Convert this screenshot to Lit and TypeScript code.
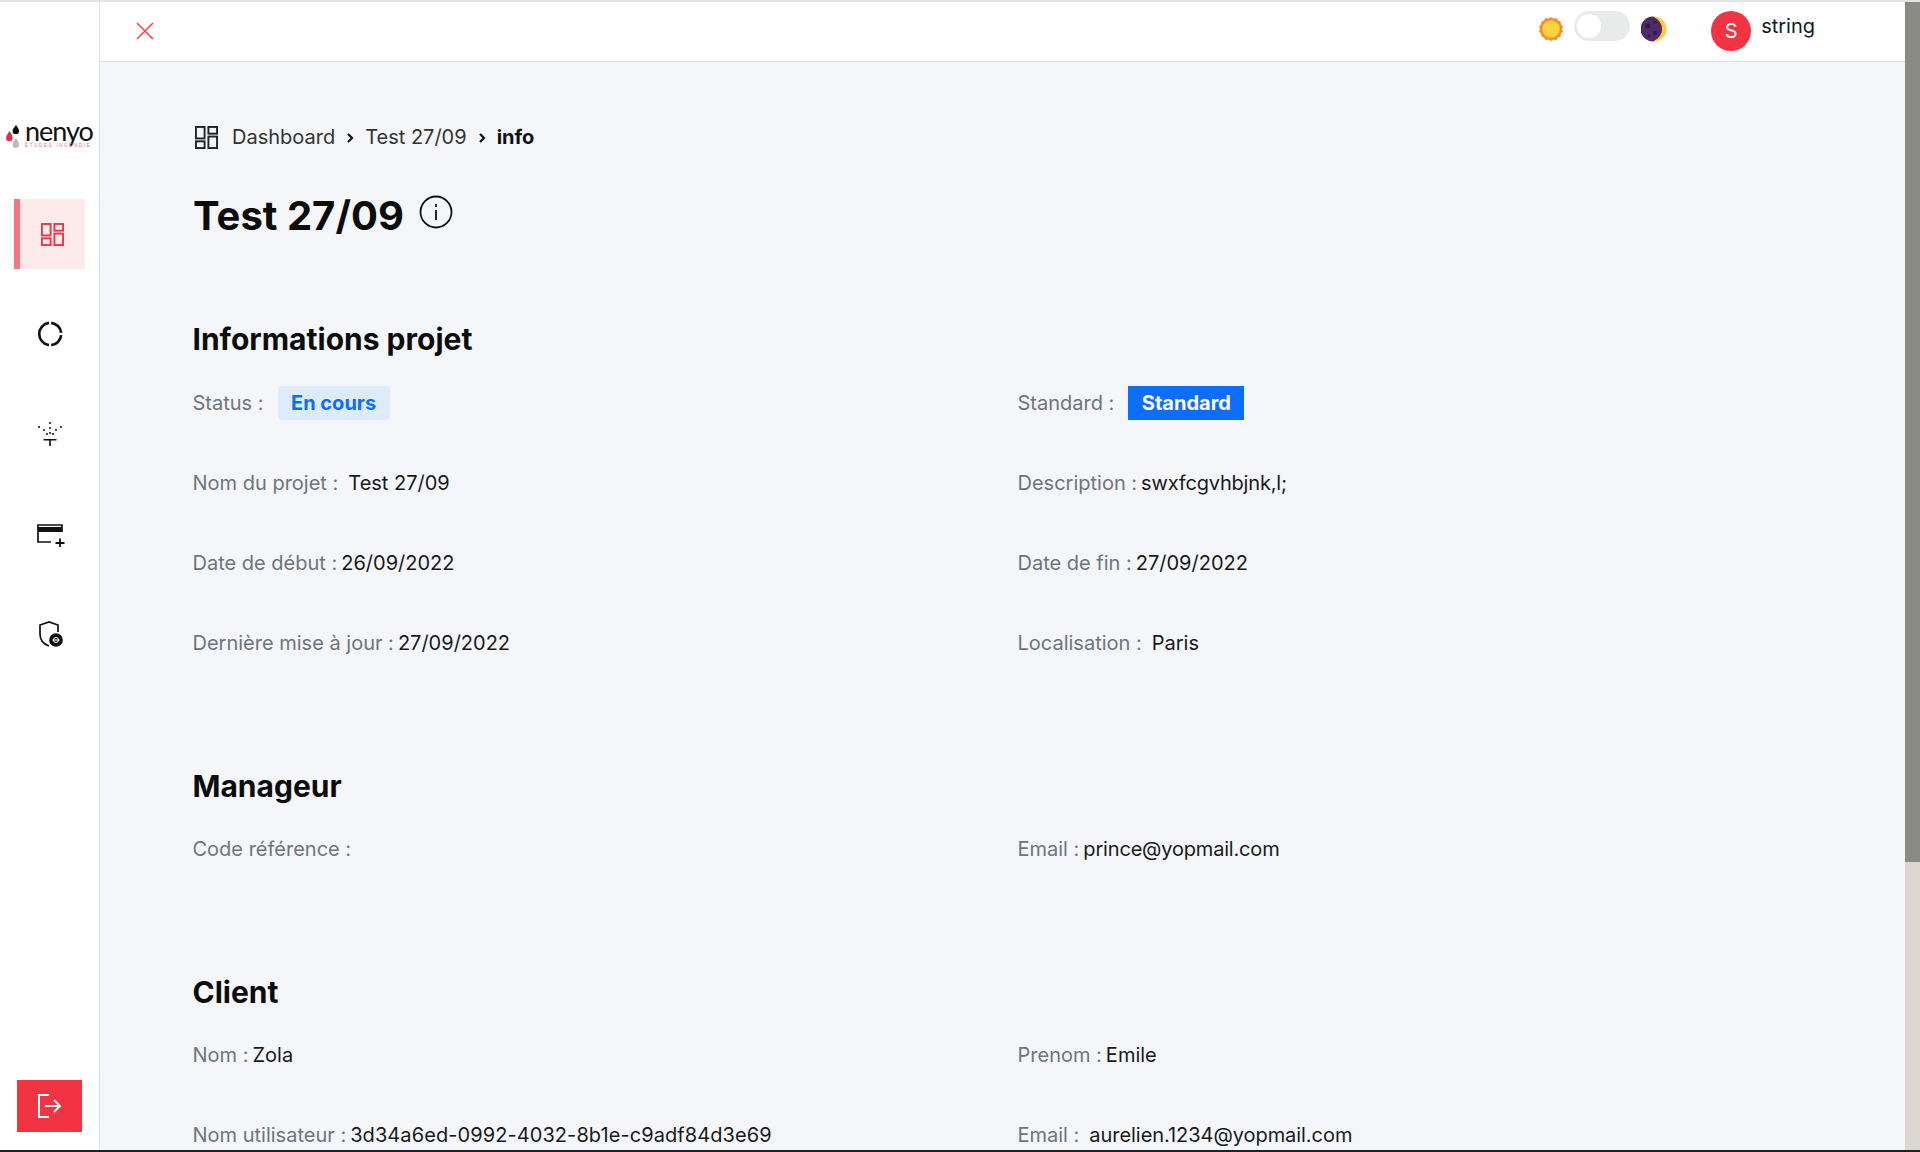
import { LitElement, html, css } from 'lit';
import { customElement } from 'lit/decorators.js';

const field = (label: string, value: string, cls = '') => html`
    <div class="field">
        <span class="label">${label}</span><span class="value ${cls}">${value}</span>
    </div>
`;

const gridIcon = (color: string) => html`
    <svg class="grid-icon" width="23" height="23" viewBox="0 0 24 24" fill="none" stroke=${color} stroke-width="2">
        <rect x="1" y="1" width="9" height="12"/><rect x="14" y="1" width="9" height="7"/>
        <rect x="1" y="16" width="9" height="7"/><rect x="14" y="11" width="9" height="12"/>
    </svg>
`;

@customElement('app-root')
export class AppRoot extends LitElement {
    static get styles () {
        return css`
            :host {
                display: block;
                height: 1152px;
                overflow: hidden;
                font-family: Inter, "Liberation Sans", sans-serif;
                font-optical-sizing: none;
                background: #f5f6f9;
                color: #111;
            }
            .frame {
                height: 1152px;
                box-sizing: border-box;
                border-top: 2px solid #e2e3e5;
                border-bottom: 2px solid #202124;
                display: flex;
            }
            .sidebar {
                width: 100px;
                flex: none;
                box-sizing: border-box;
                background: #fff;
                border-right: 1px solid #dfe1e6;
                display: flex;
                flex-direction: column;
                align-items: center;
            }
            .logo {
                margin-top: 119px;
                height: 29px;
                display: flex;
                gap: 5px;
                align-items: flex-start;
                align-self: flex-start;
                margin-left: 6px;
            }
            .logo svg { flex: none; margin-top: 4px; }
            .logo-text { display: flex; flex-direction: column; }
            .logo-name {
                font-family: Lato, sans-serif;
                font-size: 27px;
                line-height: 20px;
                letter-spacing: -1px;
                color: #111;
            }
            .logo-sub {
                font-family: "Liberation Sans", sans-serif;
                font-size: 4.500px;
                line-height: 6px;
                letter-spacing: 1.700px;
                color: #ee6a75;
                white-space: nowrap;
                margin-top: 2px;
            }
            .nav {
                margin-top: 49px;
                display: flex;
                flex-direction: column;
                gap: 30px;
                align-self: flex-start;
                margin-left: 14px;
            }
            .nav-item {
                width: 71px;
                height: 70px;
                box-sizing: border-box;
                display: flex;
                align-items: center;
                justify-content: center;
            }
            .nav-item.active {
                background: #fdeaeb;
                border-left: 6px solid #f77681;
            }
            .logout {
                margin-top: auto;
                margin-bottom: 18px;
                width: 65px;
                height: 52px;
                background: #f13342;
                display: flex;
                align-items: center;
                justify-content: center;
                margin-left: -1px;
            }
            .main {
                flex: 1;
                min-width: 0;
                display: flex;
                flex-direction: column;
            }
            .topbar {
                height: 60px;
                flex: none;
                box-sizing: border-box;
                background: #fff;
                border-bottom: 1px solid #dcdedf;
                display: flex;
                align-items: center;
                padding: 0 0 2px 36px;
            }
            .tools {
                margin-left: auto;
                margin-right: 90px;
                display: flex;
                align-items: center;
            }
            .tools .mode { margin-top: -3px; }
            .switch {
                width: 56px;
                height: 30px;
                box-sizing: border-box;
                border-radius: 15px;
                background: #e9ebea;
                padding: 3px;
                margin: -9px 11px 0 10px;
            }
            .knob {
                width: 24px;
                height: 24px;
                border-radius: 50%;
                background: #fff;
            }
            .avatar {
                width: 40px;
                height: 40px;
                border-radius: 50%;
                background: #f13342;
                color: #fff;
                font-size: 20px;
                display: flex;
                align-items: center;
                justify-content: center;
                margin-left: 44px;
            }
            .user {
                font-size: 20px;
                margin-left: 10px;
                margin-top: -9px;
                color: #111827;
            }
            .content {
                flex: 1;
                overflow: hidden;
                padding: 60px 0 0 92.500px;
            }
            .crumbs {
                display: flex;
                align-items: center;
                height: 30px;
                font-size: 20px;
                color: #333;
            }
            .crumbs svg { flex: none; }
            .crumbs .grid-icon { margin: 0 14px 0 2.500px; }
            .crumbs .sep { margin: 1px 11px 0 11px; }
            .crumbs b { color: #111; font-weight: 700; }
            .heading {
                display: flex;
                align-items: flex-start;
                margin-top: 36px;
                height: 56px;
            }
            h1 {
                margin: 0 0 0 .500px;
                font-size: 40px;
                line-height: 56px;
                font-weight: 700;
                color: #0c0c0c;
            }
            .heading svg { margin: 7px 0 0 15px; }
            h2 {
                margin: 0;
                font-size: 30px;
                line-height: 40px;
                font-weight: 700;
                color: #0c0c0c;
            }
            .first { margin-top: 75px; }
            .section { margin-top: 68px; }
            .section.next { margin-top: 68px; }
            .rows {
                display: grid;
                grid-template-columns: 825px 1fr;
                grid-auto-rows: 80px;
                margin-top: 19px;
            }
            .section + .rows { margin-top: 18px; }
            .field {
                display: flex;
                align-items: center;
                height: 50px;
                font-size: 20px;
                white-space: nowrap;
            }
            .label { color: #6c757d; }
            .value { color: #191919; margin-left: 4px; }
            .value.spaced { margin-left: 10px; }
            .value.tight { letter-spacing: -0.180px; }
            .value.spaced.tight { letter-spacing: -0.050px; }
            .value.wide { letter-spacing: 0.080px; }
            .badge {
                font-size: 20px;
                font-weight: 700;
                height: 34px;
                display: flex;
                align-items: center;
                padding: 0 13.500px;
                margin-left: 14px;
            }
            .badge.soft { background: #deebfb; color: #0d6efd; border-radius: 4px; }
            .badge.solid { background: #0d6efd; color: #fff; }
            .scrollbar {
                width: 15px;
                flex: none;
                background: #dcd7d0;
            }
            .thumb { height: 860px; background: #8a8b84; }
        `;
    }

    render () {
        return html`
            <div class="frame">
                <aside class="sidebar">
                    <div class="logo">
                        <svg width="14" height="25" viewBox="0 0 14 25">
                            <path d="M3.500 6c1.800 2.800 3 4.500 3 7a3.200 3.200 0 0 1-6.400 0c0-2.500 1.600-4 3.400-7z" fill="#ee2a38"/>
                            <path d="M10 0c1.800 2.800 3 4 3 6a3.200 3.200 0 0 1-6.400 0c0-2 1.600-3.200 3.400-6z" fill="#0d0d0d"/>
                            <path d="M10 13c1.800 2.800 3 4.500 3 6.800a3.200 3.200 0 0 1-6.400 0c0-2.300 1.600-4 3.400-6.800z" fill="#c3b8b2"/>
                        </svg>
                        <div class="logo-text">
                            <span class="logo-name">nenyo</span>
                            <span class="logo-sub">ÉTUDES INCENDIE</span>
                        </div>
                    </div>
                    <nav class="nav">
                        <div class="nav-item active">${gridIcon('#e8364a')}</div>
                        <div class="nav-item">
                            <svg width="26" height="26" viewBox="0 0 26 26" fill="none" stroke="#111" stroke-width="2.700">
                                <path d="M12 1.800A11.300 11.300 0 0 0 12 24.200"/>
                                <path d="M14.200 1.800A11.300 11.300 0 0 1 24.200 11.800"/>
                                <path d="M24.200 14.200A11.300 11.300 0 0 1 14.200 24.200"/>
                            </svg>
                        </div>
                        <div class="nav-item">
                            <svg width="26" height="26" viewBox="0 0 26 26" fill="#111">
                                <circle cx="13" cy="2" r="1"/><circle cx="13" cy="7" r="1"/><circle cx="13" cy="12" r="1"/>
                                <circle cx="2" cy="6" r="1"/><circle cx="7" cy="9" r="1"/><circle cx="10" cy="13" r="1"/>
                                <circle cx="24" cy="6" r="1"/><circle cx="19" cy="9" r="1"/><circle cx="16" cy="13" r="1"/>
                                <path d="M6.500 18h13v1.500h-5.700V25h-1.600v-5.500H6.500z"/>
                            </svg>
                        </div>
                        <div class="nav-item">
                            <svg width="30" height="26" viewBox="0 0 30 26" fill="none" stroke="#111" stroke-width="1.700">
                                <path d="M16 21H3V4h24v7"/>
                                <path d="M3 8.500h24" stroke-width="5"/>
                                <path d="M25 17.500v9M20.500 22h9" stroke-width="1.800"/>
                            </svg>
                        </div>
                        <div class="nav-item">
                            <svg width="26" height="28" viewBox="0 0 26 28" fill="none" stroke="#111" stroke-width="1.700">
                                <path d="M12 26C6 24 3 20 3 14V5l9-3 9 3v7"/>
                                <circle cx="19" cy="20" r="6" fill="#111"/>
                                <path d="M15.500 20h7" stroke="#fff" stroke-width="1.100"/>
                                <circle cx="19" cy="20" r="2.500" stroke="#fff" stroke-width="1"/>
                            </svg>
                        </div>
                    </nav>
                    <div class="logout">
                        <svg width="26" height="24" viewBox="0 0 26 24" fill="none" stroke="#fff" stroke-width="2">
                            <path d="M13 1H3v22h10"/>
                            <path d="M9 12h15M18 6l6 6-6 6"/>
                        </svg>
                    </div>
                </aside>
                <div class="main">
                    <header class="topbar">
                        <svg width="18" height="18" viewBox="0 0 18 18" stroke="#f0414f" stroke-width="1.600" fill="none">
                            <path d="M1 1l16 16M17 1L1 17"/>
                        </svg>
                        <div class="tools">
                            <svg class="mode" width="26" height="26" viewBox="0 0 26 26">
                                <path d="M13 1l2.500 1.500 3-.5 1.500 2.500 2.500 1 .5 3 2 2-1 2.500 1 2.500-2 2-.5 3-2.500 1L18.500 24l-3-.5L13 25l-2.500-1.500-3 .5L6 21.500 3.500 20.500l-.5-3-2-2L2 13l-1-2.500 2-2 .5-3L6 4.500 7.500 2l3 .5z" fill="#fb8a2e"/>
                                <circle cx="13" cy="13" r="8.700" fill="#ffd23f"/>
                            </svg>
                            <div class="switch"><div class="knob"></div></div>
                            <svg class="mode" width="26" height="26" viewBox="0 0 26 26">
                                <circle cx="13" cy="13" r="12.500" fill="#ffcb3d"/>
                                <path d="M12 .5A12.500 12.500 0 1 0 12 25.500C19 22 21 17 21 13S19 4 12 .5z" fill="#4d2c66"/>
                                <circle cx="7" cy="10" r="2.500" fill="#33194a"/>
                                <circle cx="14" cy="17" r="2" fill="#33194a"/>
                                <circle cx="14" cy="6" r="1.500" fill="#33194a"/>
                                <circle cx="8" cy="20" r="1.200" fill="#33194a"/>
                            </svg>
                            <div class="avatar">S</div>
                            <span class="user">string</span>
                        </div>
                    </header>
                    <main class="content">
                        <div class="crumbs">
                            ${gridIcon('#222')}
                            <span>Dashboard</span>
                            <svg class="sep" width="8" height="10" viewBox="0 0 8 10" fill="none" stroke="#111" stroke-width="2.200"><path d="M2 1l4 4-4 4"/></svg>
                            <span>Test 27/09</span>
                            <svg class="sep" width="8" height="10" viewBox="0 0 8 10" fill="none" stroke="#111" stroke-width="2.200"><path d="M2 1l4 4-4 4"/></svg>
                            <b>info</b>
                        </div>
                        <div class="heading">
                            <h1>Test 27/09</h1>
                            <svg width="34" height="34" viewBox="0 0 34 34" fill="none" stroke="#111" stroke-width="1.800">
                                <circle cx="17" cy="17" r="15.500"/>
                                <path d="M17 15v10M17 9v3"/>
                            </svg>
                        </div>
                        <h2 class="first">Informations projet</h2>
                        <div class="rows">
                            <div class="field"><span class="label">Status :</span><span class="badge soft">En cours</span></div>
                            <div class="field"><span class="label">Standard :</span><span class="badge solid">Standard</span></div>
                            ${field('Nom du projet :', 'Test 27/09', 'spaced')}
                            ${field('Description :', 'swxfcgvhbjnk,l;', 'tight')}
                            ${field('Date de début :', '26/09/2022')}
                            ${field('Date de fin :', '27/09/2022')}
                            ${field('Dernière mise à jour :', '27/09/2022')}
                            ${field('Localisation :', 'Paris', 'spaced')}
                        </div>
                        <h2 class="section">Manageur</h2>
                        <div class="rows">
                            ${field('Code référence :', '')}
                            ${field('Email :', 'prince@yopmail.com', 'tight')}
                        </div>
                        <h2 class="section next">Client</h2>
                        <div class="rows">
                            ${field('Nom :', 'Zola')}
                            ${field('Prenom :', 'Emile')}
                            ${field('Nom utilisateur :', '3d34a6ed-0992-4032-8b1e-c9adf84d3e69', 'wide')}
                            ${field('Email :', 'aurelien.1234@yopmail.com', 'spaced tight')}
                        </div>
                    </main>
                </div>
                <div class="scrollbar"><div class="thumb"></div></div>
            </div>
        `;
    }
}
